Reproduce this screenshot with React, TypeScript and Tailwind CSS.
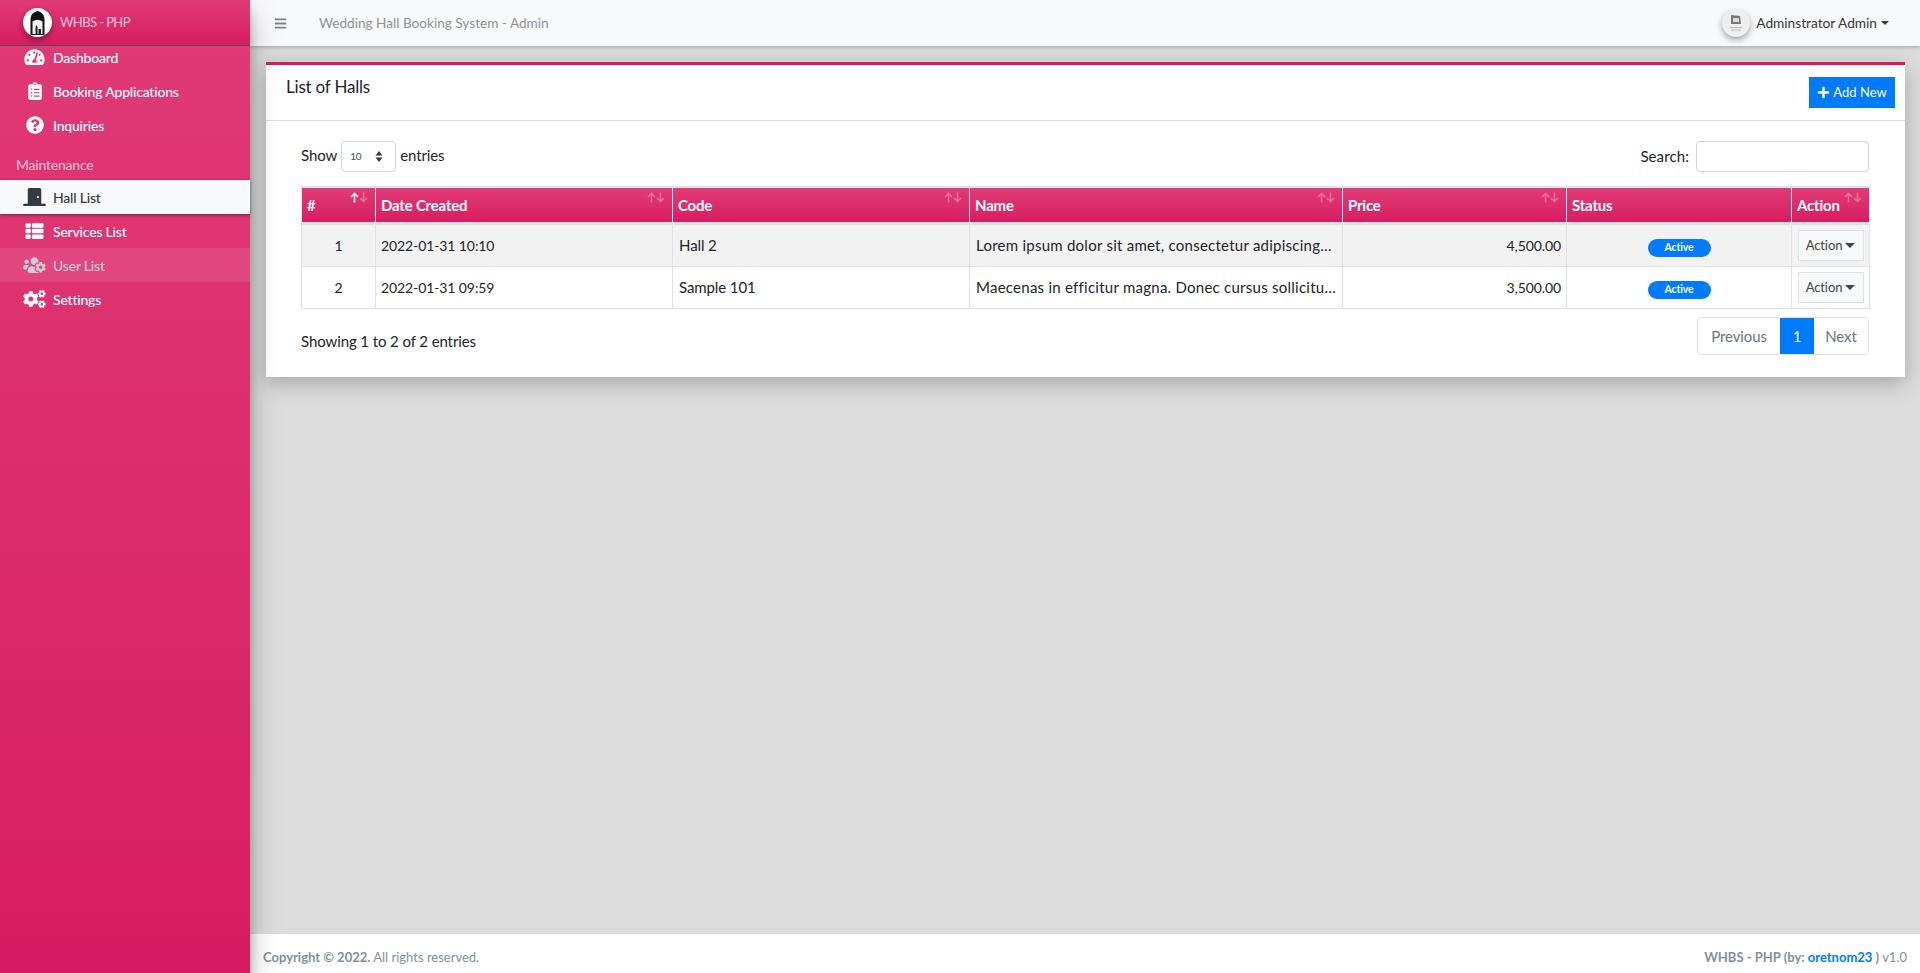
import React from 'react';
import {
  FaBars,
  FaClipboardList,
  FaCogs,
  FaDoorClosed,
  FaPlus,
  FaQuestionCircle,
  FaTachometerAlt,
  FaThList,
  FaUsersCog,
} from 'react-icons/fa';

const NavItem: React.FC<{ icon: React.ReactNode; label: string; state?: 'active' | 'hover' }> = ({ icon, label, state }) => {
  const look =
    state === 'active'
      ? 'bg-[#f8f9fa] text-[#343a40] shadow-[0_1px_3px_rgba(0,0,0,0.45)] relative'
      : state === 'hover'
        ? 'bg-white/10 text-[#c9ced8]'
        : 'text-white';
  return (
    <a className={`flex h-[34px] items-center pl-[23px] ${look}`}>
      <span className="flex w-[23px] justify-center text-[18px]">{icon}</span>
      <span className="ml-[7px] text-[14px] font-medium tracking-[-0.2px]">{label}</span>
    </a>
  );
};

const SortArrows: React.FC<{ active?: boolean }> = ({ active }) => (
  <svg className="absolute right-[7px] top-[4px]" width="18" height="11" viewBox="0 0 18 11" fill="none" strokeWidth="1.6">
    <path d="M4.500 10.500V1.500M1 5l3.500-3.500L8 5" stroke="#fff" opacity={active ? 1 : 0.3} />
    <path d="M13.500 0.500v9M10 6l3.500 3.500L17 6" stroke="#fff" opacity="0.3" />
  </svg>
);

const HEADERS = [
  { label: '#', sort: true, active: true },
  { label: 'Date Created', sort: true },
  { label: 'Code', sort: true },
  { label: 'Name', sort: true },
  { label: 'Price', sort: true },
  { label: 'Status', sort: false },
  { label: 'Action', sort: true },
];

const ROWS = [
  {
    id: 1,
    date: '2022-01-31 10:10',
    code: 'Hall 2',
    name: 'Lorem ipsum dolor sit amet, consectetur adipiscing…',
    price: '4,500.00',
  },
  {
    id: 2,
    date: '2022-01-31 09:59',
    code: 'Sample 101',
    name: 'Maecenas in efficitur magna. Donec cursus sollicitu…',
    price: '3,500.00',
  },
];

export default function App() {
  return (
    <div className="flex h-screen overflow-hidden bg-[#dcdcdc] font-['Lato',sans-serif] text-[15px] tracking-[-0.1px] text-[#212529]">
      {/* sidebar */}
      <aside className="relative z-20 flex w-[250px] shrink-0 flex-col bg-gradient-to-b from-[#e03a76] to-[#d81b60] shadow-[0_14px_28px_rgba(0,0,0,0.25),0_10px_10px_rgba(0,0,0,0.22)]">
        <div className="relative z-10 flex h-[46px] shrink-0 items-center border-b border-[#4b545c] bg-gradient-to-b from-[#e03a76] to-[#d81b60] pl-[23px]">
          <span className="flex h-[29px] w-[29px] items-center justify-center rounded-full bg-white shadow-[0_3px_6px_rgba(0,0,0,0.4)]">
            <svg width="17" height="24" viewBox="0 0 17 24">
              <path d="M1.500 24V9C1.500 4 4 1 8.500 0 13 1 15.500 4 15.500 9v15z" fill="#111" />
              <path d="M3.500 23V10.500q5-3.500 10 0V23z" fill="#f2f2f2" />
              <path d="M6.500 23v-7l1-2 1 2v7zM9.500 23v-5h2.500v5z" fill="#222" />
            </svg>
          </span>
          <span className="ml-[8px] text-[13px] tracking-[-0.6px] text-[#fbc6da]">WHBS - PHP</span>
        </div>
        <nav className="-mt-[6px] flex flex-col">
          <NavItem icon={<FaTachometerAlt className="h-[18px] w-[21px]" />} label="Dashboard" />
          <NavItem icon={<FaClipboardList />} label="Booking Applications" />
          <NavItem icon={<FaQuestionCircle />} label="Inquiries" />
          <div className="flex h-[38px] items-center pl-[16px] pt-[6px] text-[14px] tracking-[-0.2px] text-[#ecc0d2]">Maintenance</div>
          <NavItem icon={<FaDoorClosed className="h-[18px] w-[23px]" />} label="Hall List" state="active" />
          <NavItem icon={<FaThList className="h-[18px] w-[19px]" />} label="Services List" />
          <NavItem icon={<FaUsersCog className="h-[18px] w-[23px]" />} label="User List" state="hover" />
          <NavItem icon={<FaCogs className="h-[18px] w-[23px]" />} label="Settings" />
        </nav>
      </aside>

      <div className="flex min-w-0 flex-1 flex-col">
        {/* top bar */}
        <header className="relative z-10 flex h-[46px] shrink-0 items-center bg-[#f8f9fa] pl-[24px] pr-[31px] shadow-[0_1px_4px_rgba(0,0,0,0.25)]">
          <FaBars className="text-[13px] text-[#7b8188]" />
          <span className="ml-[32px] text-[13.600px] tracking-normal text-[#8d9399]">Wedding Hall Booking System - Admin</span>
          <div className="ml-auto flex items-center">
            <span className="flex h-[28px] w-[28px] items-center justify-center rounded-full bg-[#eeeeee] shadow-[0_3px_6px_rgba(0,0,0,0.35)]">
              <svg width="16" height="18" viewBox="0 0 16 18">
                <path d="M3 1l9 1 1 8H3z" fill="#777" />
                <path d="M5 4h6v4H5z" fill="#ddd" />
                <path d="M2 13h12v1H2zM3 15.500h10v1H3z" fill="#bbb" />
              </svg>
            </span>
            <span className="ml-[6px] text-[13.700px] tracking-normal text-[#343a40]">Adminstrator Admin</span>
            <span className="ml-[4px] border-x-[4px] border-t-[4px] border-x-transparent border-t-[#343a40]" />
          </div>
        </header>

        {/* main content */}
        <main className="flex-1 pl-[16px] pr-[15px] pt-[16px]">
          <section className="border-t-[3px] border-[#d81b60] bg-white shadow-[0_6px_20px_rgba(0,0,0,0.25)]">
            <div className="flex h-[56px] items-start justify-between border-b border-[#dfdfdf] pl-[20px] pr-[10px] pt-[12px]">
              <h3 className="-mt-[3px] text-[17px] tracking-[-0.2px]">List of Halls</h3>
              <button className="flex h-[31px] w-[86px] items-center justify-center gap-[3px] bg-[#007bff] text-[13px] tracking-normal text-white">
                <FaPlus className="text-[13px]" />
                Add New
              </button>
            </div>
            <div className="px-[35px] pb-[22px] pt-[20px] pr-[36px]">
              <div className="flex items-center justify-between">
                <div className="flex items-center">
                  <span className="pb-[3px]">Show</span>
                  <span className="mx-[4px] flex h-[31px] w-[55px] items-center justify-between rounded-[4px] border border-[#ced4da] pl-[8px] pr-[12px] text-[10px] text-[#495057]">
                    10
                    <svg width="8" height="11" viewBox="0 0 8 11" fill="#343a40">
                      <path d="M4 0l3.500 4.500H.5zM4 11L.5 6.500h7z" />
                    </svg>
                  </span>
                  <span className="pb-[3px]">entries</span>
                </div>
                <div className="flex items-center">
                  <span className="tracking-[0.1px]">Search:</span>
                  <input className="ml-[7px] h-[31px] w-[173px] rounded-[4px] border border-[#ced4da]" />
                </div>
              </div>

              <table className="mt-[14px] w-[1568px] table-fixed border-separate border-spacing-0 border-t-2 border-l border-[#dee2e6]">
                <colgroup>
                  <col className="w-[74px]" />
                  <col className="w-[297px]" />
                  <col className="w-[297px]" />
                  <col className="w-[373px]" />
                  <col className="w-[224px]" />
                  <col className="w-[225px]" />
                  <col className="w-[78px]" />
                </colgroup>
                <thead>
                  <tr className="h-[37px]">
                    {HEADERS.map((h) => (
                      <th
                        key={h.label}
                        className="relative border-b-[3px] border-r border-b-[#dee2e6] border-r-[#f5f5f5] bg-gradient-to-b from-[#e03a76] to-[#d81b60] px-[5px] text-left text-[15px] font-bold tracking-[-0.2px] text-white"
                      >
                        {h.label}
                        {h.sort && <SortArrows active={h.active} />}
                      </th>
                    ))}
                  </tr>
                </thead>
                <tbody>
                  {ROWS.map((r, i) => (
                    <tr key={r.id} className={`h-[42px] ${i === 0 ? 'bg-[#f2f2f2]' : ''}`}>
                      <td className="border-b border-r border-[#dee2e6] text-center text-[14px]">{r.id}</td>
                      <td className="border-b border-r border-[#dee2e6] px-[5px] text-[14px]">{r.date}</td>
                      <td className="border-b border-r border-[#dee2e6] pl-[6px]">{r.code}</td>
                      <td className="whitespace-nowrap border-b border-r border-[#dee2e6] pl-[6px] tracking-[0.25px]">{r.name}</td>
                      <td className="border-b border-r border-[#dee2e6] px-[5px] text-right text-[14px]">{r.price}</td>
                      <td className="border-b border-r border-[#dee2e6] text-center">
                        <span className="inline-flex h-[18px] w-[63px] items-center justify-center rounded-full bg-[#007bff] text-[10.500px] font-bold text-white">
                          Active
                        </span>
                      </td>
                      <td className="border-b border-r border-[#dee2e6] text-center">
                        <button className="inline-flex h-[31px] w-[66px] items-center justify-center gap-[3px] border border-[#dee2e6] bg-[#f8f9fa] text-[13px] text-[#444444]">
                          Action
                          <span className="border-x-[5px] border-t-[5px] border-x-transparent border-t-[#444444]" />
                        </button>
                      </td>
                    </tr>
                  ))}
                </tbody>
              </table>

              <div className="mt-[8px] flex items-center justify-between">
                <span className="mt-[11px]">Showing 1 to 2 of 2 entries</span>
                <div className="flex h-[38px] overflow-hidden rounded-[4px] border border-[#dee2e6] text-[#6c757d]">
                  <span className="flex w-[82px] items-center justify-center">Previous</span>
                  <span className="flex w-[34px] items-center justify-center bg-[#007bff] text-white">1</span>
                  <span className="flex w-[54px] items-center justify-center">Next</span>
                </div>
              </div>
            </div>
          </section>
        </main>

        {/* footer */}
        <footer className="flex h-[39px] shrink-0 items-center justify-between bg-white px-[13px] pt-[8px] text-[13px] tracking-normal text-[#869099]">
          <span>
            <b>Copyright © 2022.</b> All rights reserved.
          </span>
          <span>
            <b>WHBS - PHP (by: <a className="text-[#007bff]">oretnom23</a> )</b> v1.0
          </span>
        </footer>
      </div>
    </div>
  );
}
